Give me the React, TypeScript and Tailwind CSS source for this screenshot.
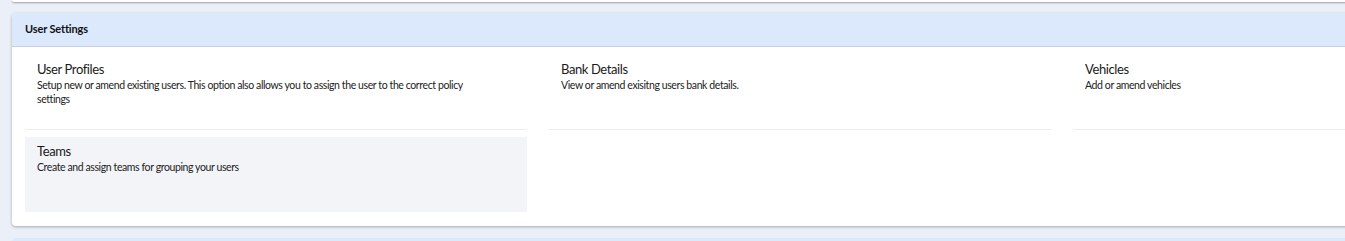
const items = [
  {
    title: 'User Profiles',
    description:
      'Setup new or amend existing users. This option also allows you to assign the user to the correct policy settings',
  },
  { title: 'Bank Details', description: 'View or amend exisitng users bank details.' },
  { title: 'Vehicles', description: 'Add or amend vehicles' },
  { title: 'Teams', description: 'Create and assign teams for grouping your users', active: true },
]

const SettingTile = ({ title, description, active }: { title: string; description: string; active?: boolean }) => (
  <div
    className={`h-[75px] px-3 pt-[6px] ${
      active ? 'bg-[#f3f4f8]' : 'border-b border-[#eeeeee]'
    }`}
  >
    <div className="text-[13px] leading-[17px] tracking-[-0.4px] text-[#1a1a1a]">{title}</div>
    <p className="text-[10.5px] leading-[14px] tracking-[-0.4px] text-[#222] pr-6">{description}</p>
  </div>
)

export default function App() {
  return (
    <div
      className="w-[1345px] h-[241px] overflow-hidden bg-[#ebeff8]"
      style={{ fontFamily: 'Lato, "Noto Sans", sans-serif' }}
    >
      <div className="w-[1600px] pl-3">
        {/* previous card, bottom edge only */}
        <div className="h-[2px] w-[1576px] bg-white rounded-b-sm shadow-[0_1px_2px_rgba(0,0,0,0.35)]" />

        {/* User Settings card */}
        <div className="mt-[11px] w-[1576px] bg-white rounded-sm shadow-[0_1px_3px_rgba(0,0,0,0.3)] overflow-hidden">
          <div className="h-[34px] flex items-center px-[13px] bg-[#dce8fc] border-b border-[#c6d2e4]">
            <h2 className="text-[11px] font-bold tracking-[-0.15px] text-[#111]">User Settings</h2>
          </div>
          <div className="grid grid-cols-3 gap-x-[22px] gap-y-[7px] px-[13px] pt-2 pb-[14px]">
            {items.map(item => (
              <SettingTile key={item.title} {...item} />
            ))}
          </div>
        </div>

        {/* next card, top edge only */}
        <div className="mt-3 h-10 w-[1576px] bg-[#dce8fc] rounded-t-sm" />
      </div>
    </div>
  )
}
